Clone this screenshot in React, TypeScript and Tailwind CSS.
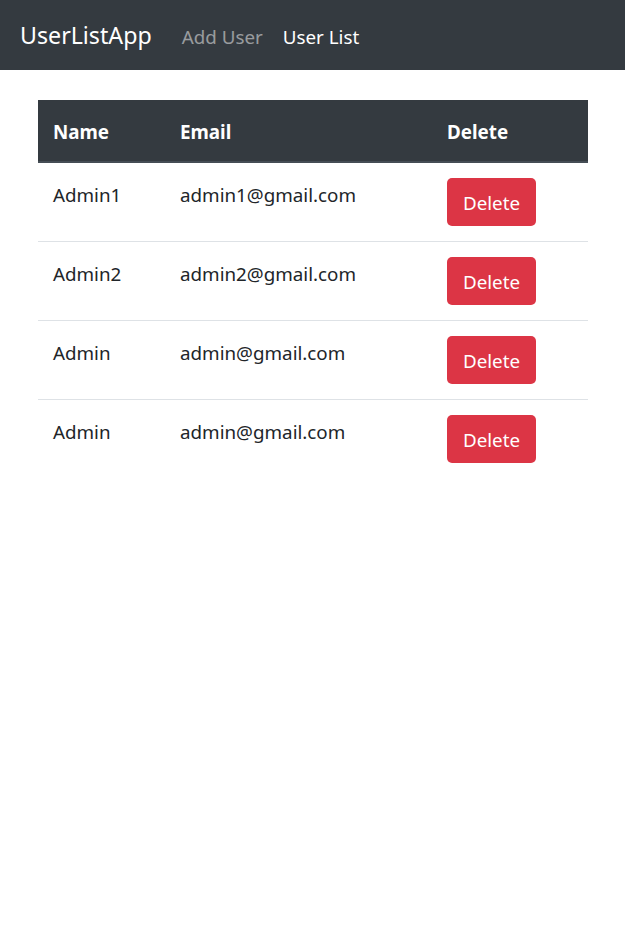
import React from "react";

type User = { name: string; email: string };

const users: User[] = [
  { name: "Admin1", email: "admin1@gmail.com" },
  { name: "Admin2", email: "admin2@gmail.com" },
  { name: "Admin", email: "admin@gmail.com" },
  { name: "Admin", email: "admin@gmail.com" },
];

export default function App() {
  return (
    <div className="min-h-screen bg-white text-[#212529] font-['Noto_Sans','Open_Sans',sans-serif] text-[18.8px] leading-[30px]">
      <nav className="flex h-[70px] items-center bg-[#343a40] px-[20px]">
        <a className="mr-[20px] text-[23.2px] leading-[37px] text-white">UserListApp</a>
        <a className="px-[10px] pt-[3px] text-white/50">Add User</a>
        <a className="px-[10px] pt-[3px] text-white">User List</a>
      </nav>

      <main className="pl-[38px] pr-[37px] pt-[30px]">
        <table className="w-full border-collapse text-left">
          <thead>
            <tr className="bg-[#343a40] text-white">
              <th className="w-[127px] border-b-2 border-[#454d55] px-[15px] pt-[17px] pb-[14px] font-bold">Name</th>
              <th className="w-[267px] border-b-2 border-[#454d55] px-[15px] pt-[17px] pb-[14px] font-bold">Email</th>
              <th className="border-b-2 border-[#454d55] px-[15px] pt-[17px] pb-[14px] font-bold">Delete</th>
            </tr>
          </thead>
          <tbody>
            {users.map((u, i) => (
              <tr key={i} className={i < users.length - 1 ? "border-b border-[#dee2e6]" : ""}>
                <td className="px-[15px] pt-[17px] align-top">{u.name}</td>
                <td className="px-[15px] pt-[17px] align-top">{u.email}</td>
                <td className="p-[15px] align-top">
                  <button className="h-[48px] w-[89px] rounded-[5px] bg-[#dc3545] pt-[1px] text-white">
                    Delete
                  </button>
                </td>
              </tr>
            ))}
          </tbody>
        </table>
      </main>
    </div>
  );
}
